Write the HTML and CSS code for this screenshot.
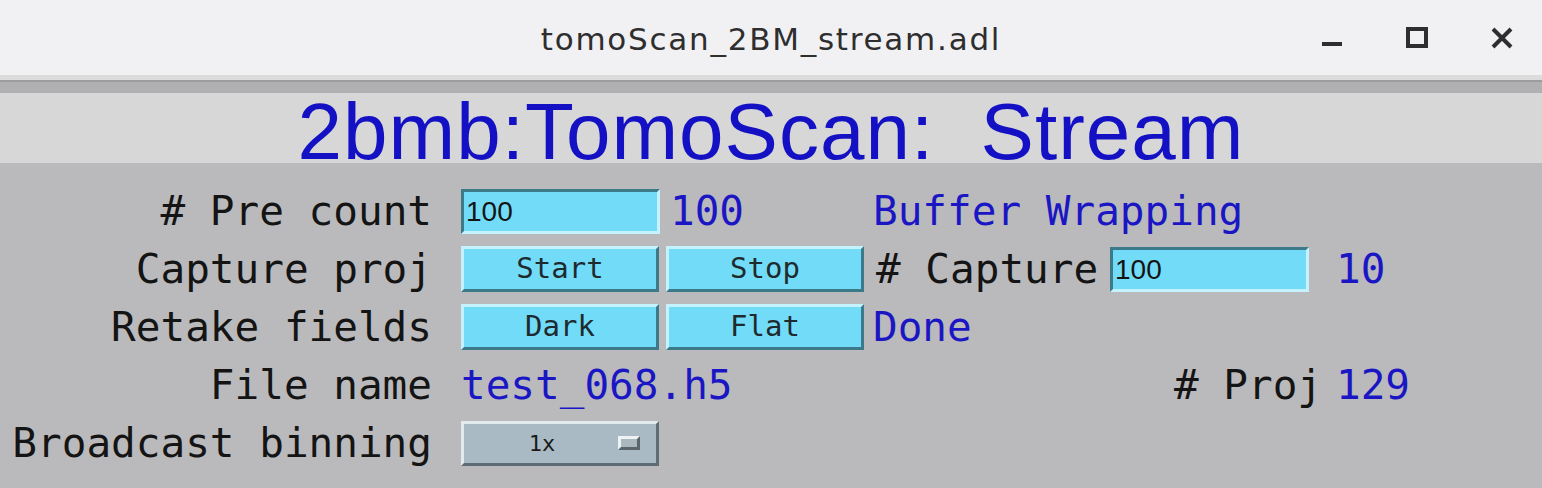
FILE: index.html
```html
<!DOCTYPE html>
<html>
<head>
<meta charset="utf-8">
<link rel="stylesheet" href="styles.css">
</head>
<body>
<div class="window">
  <header class="titlebar">
    <div class="wintitle">tomoScan_2BM_stream.adl</div>
    <div class="controls">
      <svg class="ctl" width="22" height="22" viewBox="0 0 22 22"><rect x="1" y="15" width="20" height="4" fill="#2e2e2e"/></svg>
      <svg class="ctl" width="22" height="22" viewBox="0 0 22 22"><rect x="2" y="2" width="18" height="17" fill="none" stroke="#2e2e2e" stroke-width="4"/></svg>
      <svg class="ctl" width="22" height="22" viewBox="0 0 22 22"><path d="M2 2 L20 20 M20 2 L2 20" stroke="#2e2e2e" stroke-width="4"/></svg>
    </div>
  </header>
  <main class="display">
    <div class="banner"><h1 class="heading">2bmb:TomoScan:  Stream</h1></div>
    <div class="grid">
      <div class="label">#&nbsp;Pre&nbsp;count</div>
      <div class="entry">100</div>
      <div class="value c3">100</div>
      <div class="value c4 span2">Buffer&nbsp;Wrapping</div>

      <div class="label">Capture&nbsp;proj</div>
      <div class="btn">Start</div>
      <div class="btn">Stop</div>
      <div class="label left c4">#&nbsp;Capture</div>
      <div class="entry">100</div>
      <div class="value c6">10</div>

      <div class="label">Retake&nbsp;fields</div>
      <div class="btn">Dark</div>
      <div class="btn">Flat</div>
      <div class="value c4">Done</div>

      <div class="label">File&nbsp;name</div>
      <div class="value c2 span2">test_068.h5</div>
      <div class="label proj c5">#&nbsp;Proj</div>
      <div class="value c6">129</div>

      <div class="label">Broadcast&nbsp;binning</div>
      <div class="menu"><span class="menutext">1x</span><span class="menuicon"></span></div>
    </div>
  </main>
</div>
</body>
</html>
```

FILE: styles.css
```css
html, body {
  margin: 0;
  padding: 0;
  background: #bababc;
}
.window {
  width: 1542px;
  height: 488px;
  overflow: hidden;
  display: flex;
  flex-direction: column;
}
.titlebar {
  height: 75px;
  background: #f1f1f3;
  border-bottom: 5px solid #dcdcdc;
  display: flex;
  align-items: center;
  justify-content: center;
  position: relative;
}
.wintitle {
  font-family: "DejaVu Sans", sans-serif;
  font-size: 31px;
  letter-spacing: 1.75px;
  color: #2e2e2e;
  padding-top: 2px;
}
.controls {
  position: absolute;
  right: 29px;
  top: 27px;
  display: flex;
  gap: 63px;
}
.ctl { display: block; }
.display {
  flex: 1;
  border-top: 2px solid #9c9c9c;
  background: #bababc;
}
.banner {
  border-top: 11px solid #b0b0b2;
  background: #d7d7d7;
  height: 66px;
  padding-top: 4px;
}
.heading {
  margin: 0;
  font-family: "Liberation Sans", Arial, sans-serif;
  font-weight: normal;
  font-size: 80px;
  letter-spacing: 1px;
  line-height: 70px;
  color: #1410c4;
  text-align: center;
  white-space: pre;
}
.grid {
  padding-top: 19px;
  display: grid;
  grid-template-columns: 461px 205px 207px 237px 226px 1fr;
  grid-auto-rows: 58px;
  align-items: center;
  font-family: "DejaVu Sans Mono", monospace;
  font-size: 41px;
}
.label {
  grid-column: 1;
  text-align: right;
  padding-right: 29px;
  color: #141414;
  white-space: nowrap;
}
.label.left {
  text-align: left;
  padding-right: 0;
  padding-left: 3px;
}
.label.proj {
  padding-right: 14px;
}
.value {
  color: #1a16c4;
  white-space: nowrap;
}
.c2 { grid-column: 2; }
.c3 { grid-column: 3; padding-left: 4px; }
.c4 { grid-column: 4; }
.c5 { grid-column: 5; }
.c6 { grid-column: 6; }
.c2.span2 { grid-column: 2 / span 2; }
.c4.span2 { grid-column: 4 / span 2; }
.entry {
  width: 199px;
  height: 45px;
  box-sizing: border-box;
  background: #72dcf8;
  border: 3px solid;
  border-color: #3c7a8a #c4f2ff #c4f2ff #3c7a8a;
  font-family: "Liberation Sans", Arial, sans-serif;
  font-size: 28px;
  line-height: 39px;
  color: #141414;
  padding-left: 2px;
}
.btn {
  width: 198px;
  height: 46px;
  box-sizing: border-box;
  background: #72dcf8;
  border: 3px solid;
  border-color: #c4f2ff #3c7a8a #3c7a8a #c4f2ff;
  font-family: "DejaVu Sans Mono", monospace;
  font-size: 29px;
  line-height: 38px;
  text-align: center;
  color: #1e2a2e;
}
.menu {
  grid-column: 2;
  width: 198px;
  height: 45px;
  box-sizing: border-box;
  background: #aabac4;
  border: 3px solid;
  border-color: #e2eaee #5e6c74 #5e6c74 #e2eaee;
  display: flex;
  align-items: center;
}
.menutext {
  flex: 1;
  text-align: center;
  font-family: "DejaVu Sans Mono", monospace;
  font-size: 22px;
  color: #1a1a1a;
  padding-left: 2px;
}
.menuicon {
  width: 22px;
  height: 14px;
  box-sizing: border-box;
  background: #aab8c0;
  border: 3px solid;
  border-color: #eef2f4 #5a666c #5a666c #eef2f4;
  margin-right: 16px;
}
```
